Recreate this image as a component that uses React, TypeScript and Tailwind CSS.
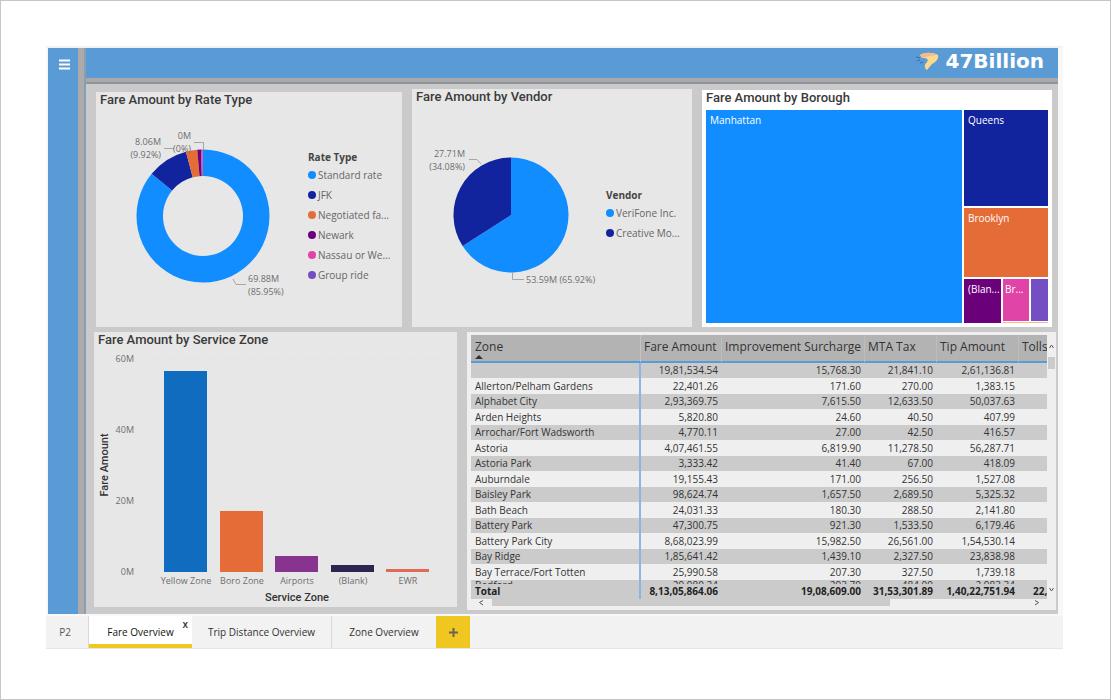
import type { ReactNode } from "react";

type Slice = { name: string; value: number; color: string };
type ZoneRow = [zone: string, fare: string, surcharge: string, mta: string, tip: string];

const rateTypes: Slice[] = [
  { name: "Standard rate", value: 85.95, color: "#118DFF" },
  { name: "JFK", value: 9.92, color: "#12239E" },
  { name: "Negotiated fa...", value: 2.75, color: "#E66C37" },
  { name: "Newark", value: 0.9, color: "#6B007B" },
  { name: "Nassau or We...", value: 0.38, color: "#E044A7" },
  { name: "Group ride", value: 0.1, color: "#744EC2" },
];

const vendors: Slice[] = [
  { name: "VeriFone Inc.", value: 65.92, color: "#118DFF" },
  { name: "Creative Mo...", value: 34.08, color: "#12239E" },
];

const serviceZones = [
  { name: "Yellow Zone", x: 70, top: 23, color: "#0F6CBF" },
  { name: "Boro Zone", x: 126, top: 163, color: "#E66C37" },
  { name: "Airports", x: 181, top: 208, color: "#88338F" },
  { name: "(Blank)", x: 237, top: 217, color: "#2B2550" },
  { name: "EWR", x: 292, top: 221, color: "#E06A55" },
];

const axisTicks = [
  { label: "60M", y: 11 },
  { label: "40M", y: 82 },
  { label: "20M", y: 153 },
  { label: "0M", y: 224 },
];

const zoneRows: ZoneRow[] = [
  ["", "19,81,534.54", "15,768.30", "21,841.10", "2,61,136.81"],
  ["Allerton/Pelham Gardens", "22,401.26", "171.60", "270.00", "1,383.15"],
  ["Alphabet City", "2,93,369.75", "7,615.50", "12,633.50", "50,037.63"],
  ["Arden Heights", "5,820.80", "24.60", "40.50", "407.99"],
  ["Arrochar/Fort Wadsworth", "4,770.11", "27.00", "42.50", "416.57"],
  ["Astoria", "4,07,461.55", "6,819.90", "11,278.50", "56,287.71"],
  ["Astoria Park", "3,333.42", "41.40", "67.00", "418.09"],
  ["Auburndale", "19,155.43", "171.00", "256.50", "1,527.08"],
  ["Baisley Park", "98,624.74", "1,657.50", "2,689.50", "5,325.32"],
  ["Bath Beach", "24,031.33", "180.30", "288.50", "2,141.80"],
  ["Battery Park", "47,300.75", "921.30", "1,533.50", "6,179.46"],
  ["Battery Park City", "8,68,023.99", "15,982.50", "26,561.00", "1,54,530.14"],
  ["Bay Ridge", "1,85,641.42", "1,439.10", "2,327.50", "23,838.98"],
  ["Bay Terrace/Fort Totten", "25,990.58", "207.30", "327.50", "1,739.18"],
];

// Only the top of this row shows above the totals
const partialRow: ZoneRow = ["Bedford", "29,980.24", "293.70", "484.00", "2,983.34"];

const headers = ["Fare Amount", "Improvement Surcharge", "MTA Tax", "Tip Amount", "Tolls"];

// Ring (or wedge, when inner is 0) centred on the origin, clockwise from 12 o'clock
function arcPath(start: number, end: number, outer: number, inner: number) {
  const at = (pct: number, r: number) => {
    const a = (pct / 100) * Math.PI * 2;
    return `${(Math.sin(a) * r).toFixed(2)} ${(-Math.cos(a) * r).toFixed(2)}`;
  };
  const large = end - start > 50 ? 1 : 0;
  const back = inner ? `L${at(end, inner)} A${inner} ${inner} 0 ${large} 0 ${at(start, inner)}` : "L0 0";
  return `M${at(start, outer)} A${outer} ${outer} 0 ${large} 1 ${at(end, outer)} ${back} Z`;
}

function Slices({ data, outer, inner = 0 }: { data: Slice[]; outer: number; inner?: number }) {
  return (
    <>
      {data.map((s, i) => {
        const start = data.slice(0, i).reduce((sum, d) => sum + d.value, 0);
        return <path key={s.name} d={arcPath(start, start + s.value, outer, inner)} fill={s.color} />;
      })}
    </>
  );
}

function Card({ title, className = "bg-[#E7E7E7]", children }: { title: string; className?: string; children: ReactNode }) {
  return (
    <section className={`min-w-0 ${className}`}>
      <h2 className="pl-1 font-['Roboto',sans-serif] text-[13px] leading-4 font-medium text-[#3A3A3A] whitespace-nowrap">{title}</h2>
      {children}
    </section>
  );
}

function Legend({ title, items }: { title: string; items: Slice[] }) {
  return (
    <div className="min-w-0 pl-1.5 text-[10px] text-[#666] whitespace-nowrap">
      <h3 className="leading-4 font-bold text-[#444]">{title}</h3>
      <ul>
        {items.map(s => (
          <li key={s.name} className="flex h-5 items-center gap-0.5">
            <span className="size-2 shrink-0 rounded-full" style={{ background: s.color }} />
            {s.name}
          </li>
        ))}
      </ul>
    </div>
  );
}

function Logo() {
  return (
    <div className="flex items-center gap-1.5">
      <svg width="24" height="18" viewBox="0 0 24 18" aria-hidden="true">
        <path d="M0 5l4 1M1 9l3-1M4 11l3-1" stroke="#2F6FB0" strokeWidth="1" />
        <path d="M4 3C9 0 16 0 22 3C23 7 20 10 16 12L11 18C8 16 8 13 11 10C13 7 11 6 6 6Z" fill="#F9D98C" />
        <path d="M4 3C9 0 16 0 22 3C17 3 13 4 6 6Z" fill="#F3B995" />
      </svg>
      <span className="font-['DejaVu_Sans',sans-serif] text-[20px] leading-6 font-bold text-white">47Billion</span>
    </div>
  );
}

function RateTypeCard() {
  return (
    <Card title="Fare Amount by Rate Type">
      <div className="flex">
        <svg width="206" height="219" viewBox="-107 -108 206 219" className="shrink-0" role="img" aria-label="Fare amount by rate type">
          <Slices data={rateTypes} outer={66.5} inner={40} />
          <g fill="none" stroke="#A6A6A6">
            <path d="M-39 -67.5H-29" />
            <path d="M-9 -73.5H.5V-66" />
            <path d="M30 63L33 68.5H43" />
          </g>
          <g className="text-[9px]" fill="#6E6E6E">
            <text x="-42" y="-71" textAnchor="end">8.06M</text>
            <text x="-42" y="-58" textAnchor="end">(9.92%)</text>
            <text x="-12" y="-77" textAnchor="end">0M</text>
            <text x="-12" y="-64" textAnchor="end">(0%)</text>
            <text x="45" y="66">69.88M</text>
            <text x="45" y="79">(85.95%)</text>
          </g>
        </svg>
        <div className="min-w-0 pt-[41px]">
          <Legend title="Rate Type" items={rateTypes} />
        </div>
      </div>
    </Card>
  );
}

function VendorCard() {
  return (
    <Card title="Fare Amount by Vendor">
      <div className="flex">
        <svg width="188" height="222" viewBox="-99 -110 188 222" className="shrink-0" role="img" aria-label="Fare amount by vendor">
          <Slices data={vendors} outer={57.5} />
          <g fill="none" stroke="#A6A6A6">
            <path d="M-42 -55.5H-34L-30 -51" />
            <path d="M1.5 57V64.5H13" />
          </g>
          <g className="text-[9px]" fill="#6E6E6E">
            <text x="-46" y="-58" textAnchor="end">27.71M</text>
            <text x="-46" y="-45" textAnchor="end">(34.08%)</text>
            <text x="15" y="68">53.59M (65.92%)</text>
          </g>
        </svg>
        <div className="min-w-0 pt-[82px]">
          <Legend title="Vendor" items={vendors} />
        </div>
      </div>
    </Card>
  );
}

function BoroughCard() {
  return (
    <Card title="Fare Amount by Borough" className="bg-white">
      <div className="grid h-[221px] grid-cols-[256fr_84fr] gap-0.5 px-1 pt-1 pb-1 text-[10px] leading-5 text-white">
        <div className="bg-[#118DFF] pl-1">Manhattan</div>
        <div className="flex min-w-0 flex-col gap-0.5">
          <div className="h-24 bg-[#12239E] pl-1">Queens</div>
          <div className="h-[69px] bg-[#E66C37] pl-1">Brooklyn</div>
          <div className="grid min-h-0 flex-1 grid-cols-[37fr_45fr] gap-0.5">
            <div className="min-w-0 bg-[#6B007B] pl-1 whitespace-nowrap">(Blan...</div>
            <div className="flex min-w-0 flex-col gap-px">
              <div className="grid flex-1 grid-cols-[26fr_17fr] gap-0.5">
                <div className="min-w-0 bg-[#E044A7] pl-0.5">Br...</div>
                <div className="bg-[#744EC2]" />
              </div>
              <div className="h-px bg-[#F5B98F]" />
            </div>
          </div>
        </div>
      </div>
    </Card>
  );
}

function ServiceZoneCard() {
  return (
    <Card title="Fare Amount by Service Zone">
      <svg viewBox="0 0 363 259" className="block w-full" role="img" aria-label="Fare amount by service zone">
        <path d="M60 11.5H350" stroke="#DDD" strokeDasharray="1 4" />
        <g className="text-[9px]" fill="#6E6E6E">
          {axisTicks.map(t => (
            <text key={t.label} x="40" y={t.y + 3} textAnchor="end">{t.label}</text>
          ))}
          {serviceZones.map(z => (
            <g key={z.name}>
              <rect x={z.x} y={z.top} width="43" height={224 - z.top} fill={z.color} />
              <text x={z.x + 22} y="236" textAnchor="middle">{z.name}</text>
            </g>
          ))}
        </g>
        <g className="font-['Roboto',sans-serif] text-[11px] font-medium" fill="#333" textAnchor="middle">
          <text x="203" y="253">Service Zone</text>
          <text transform="translate(14 117) rotate(-90)">Fare Amount</text>
        </g>
      </svg>
    </Card>
  );
}

function ZoneTable() {
  return (
    <section className="min-w-0 bg-[#EFEFEF] py-[3px] pl-1">
      <div className="flex">
        <div className="min-w-0 flex-1 overflow-hidden">
          <table className="w-[666px] table-fixed border-separate border-spacing-0 text-[10px] text-[#333]">
            <colgroup>
              <col className="w-[170px]" />
              <col className="w-[81px]" />
              <col className="w-[143px]" />
              <col className="w-[72px]" />
              <col className="w-[82px]" />
              <col />
            </colgroup>
            <thead>
              <tr className="h-7 bg-[#B3B3B3] text-left align-top text-[12px] whitespace-nowrap">
                <th className="border-r border-b-2 border-r-[#C4C4C4] border-b-[#5B9BD5] px-1 pt-1 leading-4 font-normal">
                  Zone
                  <svg width="8" height="4" viewBox="0 0 8 4" className="block" aria-hidden="true">
                    <path d="M0 4L4 0L8 4Z" fill="#333" />
                  </svg>
                </th>
                {headers.map(h => (
                  <th key={h} className="border-r border-b-2 border-r-[#BDBDBD] border-b-[#5B9BD5] px-[3px] pt-1 leading-4 font-normal">{h}</th>
                ))}
              </tr>
            </thead>
            <tbody>
              {zoneRows.map(([zone, ...values]) => (
                <tr key={zone} className="h-4 bg-[#EFEFEF] whitespace-nowrap odd:h-[15px] odd:bg-[#CBCBCB]">
                  <th className="border-r-2 border-[#8DB4E2] px-1 py-0 text-left leading-[15px] font-normal">{zone}</th>
                  {values.map((v, i) => (
                    <td key={i} className="px-1 py-0 text-right leading-[15px]">{v}</td>
                  ))}
                  <td />
                </tr>
              ))}
              <tr className="bg-[#CBCBCB]">
                {partialRow.map((v, i) => (
                  <td key={i} className="px-1 py-0 text-right first:border-r-2 first:border-[#8DB4E2] first:text-left">
                    <div className="h-1 overflow-hidden leading-[10px]">{v}</div>
                  </td>
                ))}
                <td />
              </tr>
            </tbody>
            <tfoot>
              <tr className="h-[15px] bg-[#CBCBCB] font-bold whitespace-nowrap text-[#222]">
                <th className="border-r-2 border-[#8DB4E2] px-1 py-0 text-left leading-[15px]">Total</th>
                <td className="px-1 py-0 text-right leading-[15px]">8,13,05,864.06</td>
                <td className="px-1 py-0 text-right leading-[15px]">19,08,609.00</td>
                <td className="px-1 py-0 text-right leading-[15px]">31,53,301.89</td>
                <td className="px-1 py-0 text-right leading-[15px]">1,40,22,751.94</td>
                <td className="py-0 pl-3.5 leading-[15px]">22,</td>
              </tr>
            </tfoot>
          </table>
        </div>
        <div className="flex w-[9px] flex-col items-center pt-2 pb-1.5 text-[#555]">
          <svg width="5" height="7" viewBox="0 0 5 7" fill="none" stroke="currentColor" aria-hidden="true">
            <path d="M.5 5L2.5 2L4.5 5" />
          </svg>
          <div className="mt-[7px] h-3 w-[7px] bg-[#CBCBCB]" />
          <svg width="5" height="7" viewBox="0 0 5 7" fill="none" stroke="currentColor" className="mt-auto" aria-hidden="true">
            <path d="M.5 2L2.5 5L4.5 2" />
          </svg>
        </div>
      </div>
      <div className="flex h-2 pr-4 text-[#555]">
        <svg width="21" height="8" viewBox="0 0 21 8" fill="none" stroke="currentColor" aria-hidden="true">
          <path d="M12 1.5L8.5 3.5L12 6" />
        </svg>
        <div className="h-[7px] w-[70%] bg-[#CBCBCB]" />
        <svg width="6" height="8" viewBox="0 0 6 8" fill="none" stroke="currentColor" className="ml-auto" aria-hidden="true">
          <path d="M1 1.5L4.5 3.5L1 6" />
        </svg>
      </div>
    </section>
  );
}

function PageTabs() {
  return (
    <nav className="mt-0.5 flex h-[33px] border-b border-[#E6E6E6] bg-[#F2F2F2] text-[10px] text-[#333]">
      <button className="w-[43px] border-r border-[#D9D9D9] pr-1 text-[#555]">P2</button>
      <div className="relative w-[103px] border-b-4 border-[#F0C720] bg-white">
        <button className="size-full pt-1 text-[#111]">Fare Overview</button>
        <button aria-label="Close tab" className="absolute top-0.5 right-1 leading-3 font-semibold">x</button>
      </div>
      <button className="w-[140px] border-r border-[#D9D9D9]">Trip Distance Overview</button>
      <button className="w-[104px]">Zone Overview</button>
      <button aria-label="New page" className="flex w-[34px] items-center justify-center bg-[#F0C720]">
        <svg width="9" height="9" viewBox="0 0 9 9" aria-hidden="true">
          <path d="M4.5 0V9M0 4.5H9" stroke="#6B6450" strokeWidth="2" />
        </svg>
      </button>
    </nav>
  );
}

export default function App() {
  return (
    <div className="min-h-screen border border-[#C6C6C6] bg-white py-[45px] pr-[47px] pl-[45px] font-['Open_Sans',sans-serif]">
      <div className="border-t-2 border-[#F2F2F2] bg-[#F8F8F8]">
        <div className="flex pr-[5px] pl-0.5">
          <aside className="w-[30px] shrink-0 bg-[#5B9BD5]">
            <button aria-label="Menu" className="flex w-full justify-center pt-[11px] pl-0.5">
              <svg width="11" height="11" viewBox="0 0 11 11" aria-hidden="true">
                <path d="M0 1.5H11M0 5.5H11M0 9.5H11" stroke="#FFF" strokeWidth="2" />
              </svg>
            </button>
          </aside>
          <div className="w-2 shrink-0 border-r-2 border-[#8A9DB5] bg-[#ABABAB]" />
          <main className="min-w-0 flex-1 bg-[#CACACA]">
            <header className="flex h-[30px] items-center justify-end bg-[#5B9BD5] pr-3.5 pb-1">
              <Logo />
            </header>
            <div className="h-1.5 border-b-2 border-[#8E959D] bg-[#A9A9A9]" />
            <div className="pt-[5px] pr-0.5 pb-1 pl-2">
              <div className="grid grid-cols-[306fr_280fr_350fr] items-end gap-2.5 pr-1 pl-0.5">
                <RateTypeCard />
                <VendorCard />
                <BoroughCard />
              </div>
              <div className="mt-[5px] grid grid-cols-[363fr_589fr] items-start gap-2.5">
                <ServiceZoneCard />
                <ZoneTable />
              </div>
            </div>
          </main>
        </div>
        <PageTabs />
      </div>
    </div>
  );
}
